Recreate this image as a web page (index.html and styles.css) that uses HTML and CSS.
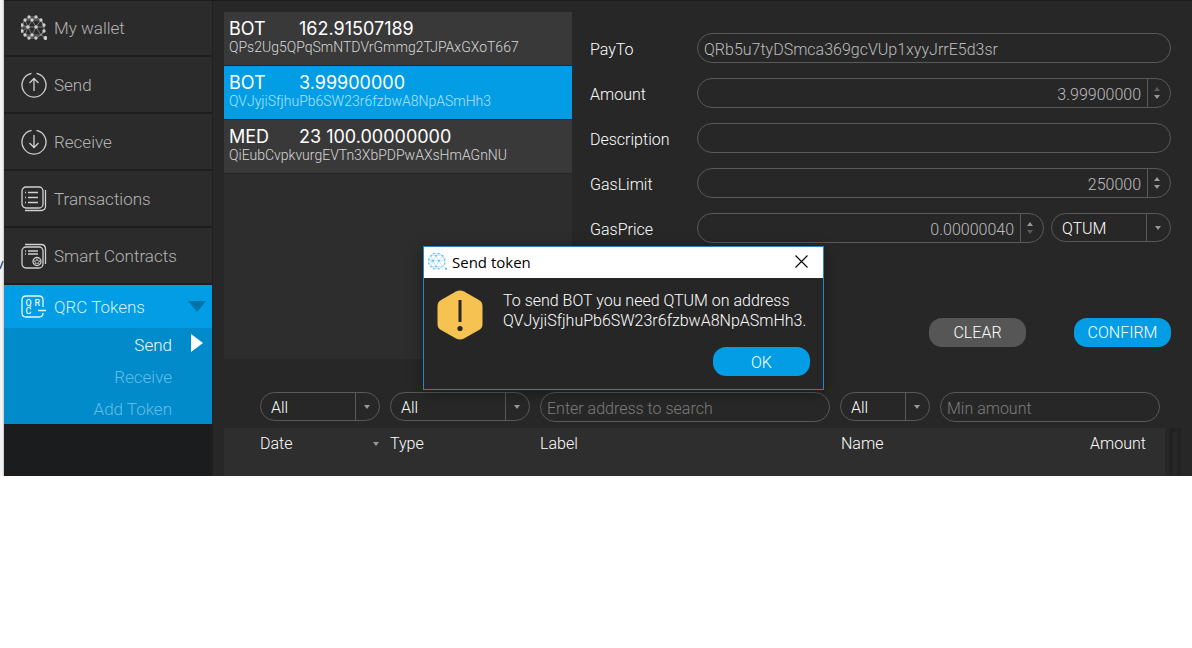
FILE: index.html
```html
<!DOCTYPE html>
<html lang="en">
<head>
<meta charset="utf-8">
<title>Qtum wallet - Send token</title>
<link rel="stylesheet" href="styles.css">
</head>
<body>
<svg class="defs" aria-hidden="true">
  <symbol id="net" viewBox="0 0 26 26">
    <g fill="none" stroke="currentColor" stroke-width="0.6" stroke-opacity="0.8">
      <path d="M8 2L15 2L20 5L23 10L23 16L20 20L15 23L8 23L4 20L1 16L1 10L4 5Z"/>
      <path d="M4 5L11 5L20 5M1 12L7 12L15 12L23 12M4 20L11 20L20 20M8 2L11 5L15 2M4 5L7 12L11 5L15 12L20 5L23 12M1 10L7 12L4 20M1 16L7 12L11 20L15 12L20 20L23 16M8 23L11 20L15 23M20 20L24.500 23"/>
    </g>
    <g fill="currentColor">
      <circle cx="8" cy="2" r="1"/><circle cx="15" cy="2" r="1"/><circle cx="20" cy="5" r="1"/><circle cx="23" cy="10" r="1"/><circle cx="23" cy="16" r="1"/><circle cx="15" cy="23" r="1"/><circle cx="8" cy="23" r="1"/><circle cx="4" cy="20" r="1"/><circle cx="1" cy="16" r="1"/><circle cx="1" cy="10" r="1"/><circle cx="4" cy="5" r="1"/><circle cx="11" cy="5" r="1"/><circle cx="7" cy="12" r="1.1"/><circle cx="15" cy="12" r="1.1"/><circle cx="11" cy="20" r="1"/><circle cx="24.500" cy="23" r="1.400"/>
    </g>
  </symbol>
</svg>
<div class="page">
<div class="edge"><svg width="4" height="12" viewBox="0 0 4 12"><path d="M0 9L3 1" stroke="#345a80" stroke-width="1.500"/></svg></div>
<div class="app">
  <nav class="side">
    <a class="item first" href="#"><svg class="icon"><use href="#net"/></svg>My wallet</a>
    <a class="item" href="#"><svg class="icon" viewBox="0 0 26 26"><path d="M10.500 1.300A12 12 0 1 0 15.500 1.300M13 19V7M8.500 11L13 6.500L17.500 11"/></svg>Send</a>
    <a class="item" href="#"><svg class="icon" viewBox="0 0 26 26"><path d="M10.500 1.300A12 12 0 1 0 15.500 1.300M13 6V18M8.500 14L13 18.500L17.500 14"/></svg>Receive</a>
    <a class="item" href="#"><svg class="icon" viewBox="0 0 26 26"><rect x="1" y="1" width="21" height="21" rx="4"/><path d="M24.500 4V20Q24.500 24.500 20 24.500H4M4 6.500H5M7 6.500H17M4 11.500H5M7 11.500H17M4 16.500H5M7 16.500H17"/></svg>Transactions</a>
    <a class="item" href="#"><svg class="icon" viewBox="0 0 26 26"><rect x="1" y="4" width="21" height="21" rx="4"/><path d="M4 1.500H20Q24.500 1.500 24.500 6V21M4 8H5M7 8H17M4 11H5M7 11H17"/><circle cx="16" cy="18.500" r="4"/><path stroke-width="0.800" d="M16 16L17 18L19 18L17.500 19.500L18 21L16 20L14 21L14.500 19.500L13 18L15 18Z"/></svg>Smart Contracts</a>
    <a class="item open" href="#"><svg class="icon" viewBox="0 0 26 26"><path d="M22 13V6Q22 2 18 2H5Q1 2 1 6V19Q1 23 5 23H18Q22 23 22 19M17 16.500H25"/><g class="letters"><text x="4.500" y="11.500">Q</text><text x="13.500" y="11.500">R</text><text x="4.500" y="20">C</text></g></svg>QRC Tokens<span class="down"></span></a>
    <div class="sub">
      <a class="current" href="#">Send</a>
      <a href="#">Receive</a>
      <a href="#">Add Token</a>
    </div>
  </nav>
  <main class="main">
    <div class="top">
      <div class="tokens">
        <button class="token"><b>BOT</b><b>162.91507189</b><span>QPs2Ug5QPqSmNTDVrGmmg2TJPAxGXoT667</span></button>
        <button class="token selected"><b>BOT</b><b>3.99900000</b><span>QVJyjiSfjhuPb6SW23r6fzbwA8NpASmHh3</span></button>
        <button class="token"><b>MED</b><b>23 100.00000000</b><span>QiEubCvpkvurgEVTn3XbPDPwAXsHmAGnNU</span></button>
      </div>
      <form class="form">
        <label for="payto">PayTo</label>
        <div class="field"><input id="payto" type="text" value="QRb5u7tyDSmca369gcVUp1xyyJrrE5d3sr"></div>
        <label for="amount">Amount</label>
        <div class="field num"><input id="amount" type="text" value="3.99900000"><span class="spin"><button type="button" class="up dim" aria-label="Increase amount"></button><button type="button" class="dn" aria-label="Decrease amount"></button></span></div>
        <label for="desc">Description</label>
        <div class="field"><input id="desc" type="text"></div>
        <label for="limit">GasLimit</label>
        <div class="field num"><input id="limit" type="text" value="250000"><span class="spin"><button type="button" class="up" aria-label="Increase limit"></button><button type="button" class="dn" aria-label="Decrease limit"></button></span></div>
        <label for="price">GasPrice</label>
        <div class="pair">
          <div class="field num"><input id="price" type="text" value="0.00000040"><span class="spin"><button type="button" class="up" aria-label="Increase price"></button><button type="button" class="dn dim" aria-label="Decrease price"></button></span></div>
          <div class="field combo"><select aria-label="Unit"><option>QTUM</option></select><span class="drop"></span></div>
        </div>
        <div class="actions"><button type="button" class="btn grey">CLEAR</button><button type="button" class="btn">CONFIRM</button></div>
      </form>
    </div>
    <div class="filters">
      <div class="field combo"><select aria-label="Date"><option>All</option></select><span class="drop"></span></div>
      <div class="field combo"><select aria-label="Type"><option>All</option></select><span class="drop"></span></div>
      <div class="field"><input type="text" aria-label="Address" placeholder="Enter address to search"></div>
      <div class="field combo"><select aria-label="Name"><option>All</option></select><span class="drop"></span></div>
      <div class="field"><input type="text" aria-label="Minimum" placeholder="Min amount"></div>
    </div>
    <div class="history">
      <table>
        <thead><tr><th class="c-date"><span>Date<i class="sort"></i></span></th><th class="c-type">Type</th><th>Label</th><th class="c-name">Name</th><th class="c-amount">Amount</th></tr></thead>
      </table>
      <div class="scroll"></div>
    </div>
  </main>
</div>
</div>
<div class="dialog" role="dialog" aria-labelledby="dlg">
  <div class="bar"><svg class="logo"><use href="#net"/></svg><span id="dlg">Send token</span><button aria-label="Close"><svg width="13" height="13" viewBox="0 0 13 13"><path d="M0.500 0.500L12.500 12.500M12.500 0.500L0.500 12.500" stroke="#000" stroke-width="1.100"/></svg></button></div>
  <div class="body">
    <svg width="46" height="50" viewBox="0 0 46 50"><path d="M19 1.500Q23 -0.500 27 1.500L42 10Q45.500 12 45.500 16V34Q45.500 38 42 40L27 48.500Q23 50.500 19 48.500L4 40Q0.500 38 0.500 34V16Q0.500 12 4 10Z" fill="#f6c251"/><path d="M21.500 10H24.500V32H21.500Z" fill="#262626"/><circle cx="23" cy="38.500" r="2.600" fill="#262626"/></svg>
    <p>To send BOT you need QTUM on address<br>QVJyjiSfjhuPb6SW23r6fzbwA8NpASmHh3.</p>
  </div>
  <div class="foot"><button class="btn">OK</button></div>
</div>
</body>
</html>
```
FILE: styles.css
```css
* { box-sizing: border-box; }
body { margin: 0; background: #fff; color: #fff; font: 300 16px/20px Roboto, "Liberation Sans", sans-serif; position: relative; }
a { color: inherit; text-decoration: none; }
button, input, select { font: inherit; color: inherit; background: none; border: 0; margin: 0; padding: 0; outline: 0; }
.defs { position: absolute; width: 0; height: 0; }
.page { display: flex; }
.edge { width: 4px; background: linear-gradient(90deg, #f4f4f4 2px, #c8cacc); padding-top: 260px; overflow: hidden; }
.edge svg { display: block; }
.app { flex: 1; min-width: 0; display: grid; grid-template-columns: 209px minmax(0, 1fr); background: #272727; border-top: 1px solid #1c1c1c; }

.side { background: #1a1c1e; border-right: 1px solid #202020; }
.item { display: flex; align-items: center; gap: 7px; height: 57px; padding: 2px 6px 2px 17px; background: #2b2b2b; border-bottom: 2px solid #1e1e1e; color: #b4b4b4; font-size: 17px; }
.item.first { height: 56px; }
.icon { width: 26px; height: 26px; fill: none; stroke: currentColor; stroke-width: 1.3; color: #d0d0d0; }
.letters { fill: currentColor; stroke: none; font: 500 9px Roboto, sans-serif; }
.item.open { height: 43px; padding-top: 0; padding-bottom: 0; border: 0; background: #029de5; color: #d4f1ff; }
.item.open .icon { color: #e4f7ff; }
.down { margin-left: auto; border: 9px solid transparent; border-top: 11px solid #0074a8; border-bottom: 0; }
.sub { background: #028bca; color: #62bde6; font-size: 17px; }
.sub a { display: block; height: 32px; line-height: 34px; padding-right: 40px; text-align: right; position: relative; }
.sub .current { color: #e8f8ff; }
.sub .current::after { content: ""; position: absolute; right: 9px; top: 6px; border: 9px solid transparent; border-left: 12px solid #fff; border-right: 0; }

.main { padding: 11px 11px 0 11px; }
.top { display: grid; grid-template-columns: 348px minmax(0, 1fr); gap: 18px; padding-right: 10px; }
.tokens { background: #2d2d2d; min-height: 347px; }
.token { display: grid; grid-template-columns: 70px 1fr; align-content: start; width: 100%; height: 54px; padding: 7px 5px 0; border-bottom: 1px solid #262626; background: #393939; text-align: left; }
.token b { font: 400 18px/20px Inter, sans-serif; }
.token span { grid-column: 1 / 3; font-size: 14px; line-height: 16px; color: #d8d8d8; }
.token.selected { background: #029de5; }
.token.selected span { color: #b0e4ff; }
.form { display: grid; grid-template-columns: 107px minmax(0, 1fr); grid-auto-rows: 30px; row-gap: 15px; padding-top: 21px; align-items: center; }
.form label { padding-top: 3px; }
.field { display: flex; height: 30px; border: 1px solid #595959; border-radius: 15px; overflow: hidden; color: #bdbdbd; min-width: 0; }
.field input { flex: 1; min-width: 0; width: 100%; padding: 3px 6px 0; }
.field input::placeholder { color: #7c7c7c; opacity: 1; }
.num input { text-align: right; }
.spin { width: 23px; padding-right: 4px; border-left: 1px solid #595959; display: flex; flex-direction: column; align-items: center; justify-content: center; gap: 4px; }
.spin button, .drop::after, .sort { border: 3px solid transparent; width: 0; height: 0; }
.up { border-bottom: 4px solid #999 !important; border-top: 0 !important; }
.dn, .drop::after, .sort { border-top: 4px solid #999 !important; border-bottom: 0 !important; }
.up.dim { border-bottom-color: #5a5a5a !important; }
.dn.dim { border-top-color: #5a5a5a !important; }
.pair { display: grid; grid-template-columns: minmax(0, 1fr) 120px; gap: 7px; }
.combo { height: 29px; color: #fff; }
.combo select { appearance: none; flex: 1; min-width: 0; padding: 2px 0 0 10px; }
.drop { width: 24px; border-left: 1px solid #595959; padding-right: 2px; display: flex; align-items: center; justify-content: center; }
.drop::after { content: ""; }
.actions { grid-column: 1 / 3; display: flex; justify-content: flex-end; gap: 48px; padding-top: 118px; }
.btn { width: 97px; height: 29px; border-radius: 13px; background: #029de5; padding-top: 2px; }
.btn.grey { background: #565656; }

.filters { display: grid; grid-template-columns: 120px 140px minmax(0, 1fr) 90px 220px; gap: 10px; padding: 33px 21px 6px 36px; }
.history { display: flex; gap: 4px; }
table { flex: 1; border-collapse: collapse; table-layout: fixed; background: #2e2e2e; height: 48px; }
th { padding: 6px 0 0; font-weight: 300; text-align: left; vertical-align: top; }
.c-date { width: 166px; padding-left: 36px; }
.c-date span { display: flex; justify-content: space-between; align-items: center; padding-right: 11px; }
.c-type { width: 150px; }
.c-name { width: 100px; }
.c-amount { width: 224px; padding-right: 19px; text-align: right; }
.scroll { width: 12px; border: 4px solid #222; border-bottom: 0; background: #282828; }

.dialog { position: absolute; left: 423px; top: 246px; width: 401px; border: 1px solid #2f83bd; background: #262626; box-shadow: 0 3px 14px rgba(0, 0, 0, 0.35); }
.bar { display: flex; align-items: center; height: 31px; padding: 0 15px 2px 4px; gap: 5px; background: #fff; color: #000; font: 400 15px/20px "Open Sans", sans-serif; }
.logo { width: 19px; height: 19px; color: #4fb4e8; }
.bar button { margin-left: auto; display: flex; }
.body { display: flex; gap: 20px; padding: 12px 10px 0 13px; }
.body p { margin: 0; padding-top: 1px; white-space: nowrap; }
.foot { display: flex; justify-content: flex-end; padding: 7px 13px 13px; }
```
